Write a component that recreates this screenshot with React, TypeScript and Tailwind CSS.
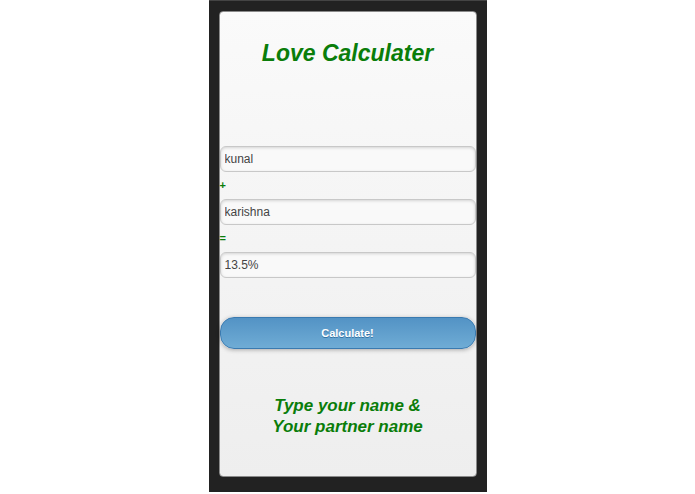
import React, { useState } from 'react';

function Field({ value, onChange }: { value: string; onChange: (v: string) => void }) {
  return (
    <input
      value={value}
      onChange={(e) => onChange(e.target.value)}
      className="block h-[26px] w-full rounded-[6px] border border-[#c8c8c8] bg-[#f9f9f9] px-[4px] text-[12px] text-[#444] shadow-[inset_0_1px_3px_rgba(0,0,0,0.15)] outline-none"
    />
  );
}

export default function App() {
  const [first, setFirst] = useState('kunal');
  const [second, setSecond] = useState('karishna');
  const [result, setResult] = useState('13.5%');

  const calc = () => {
    const s = (first + second).toLowerCase();
    let n = 0;
    for (const ch of s) n += ch.charCodeAt(0);
    setResult(((n % 1000) / 10).toFixed(1) + '%');
  };

  return (
    <div className="flex min-h-[494px] w-full justify-center bg-white font-['Liberation_Sans',Arial,sans-serif]">
      <div className="flex h-[492px] w-[278px] flex-col border-t border-t-[#444] bg-[#222] pb-[15px] pl-[10px] pr-[10px] pt-[10px]">
        <div className="flex flex-1 flex-col rounded-[4px] border border-[#8a8a8a] bg-gradient-to-b from-[#fafafa] to-[#eeeeee] pt-[28px]">
          <h1 className="text-center text-[23px] font-bold italic leading-[27px] text-[#0a7d0a]">
            Love Calculater
          </h1>

          <div className="mt-[79px]">
            <Field value={first} onChange={setFirst} />
            <div className="h-[27px] pt-[8px] text-[11px] font-bold leading-[11px] text-[#0a7d0a]">+</div>
            <Field value={second} onChange={setSecond} />
            <div className="h-[27px] pt-[8px] text-[11px] font-bold leading-[11px] text-[#0a7d0a]">=</div>
            <Field value={result} onChange={setResult} />
          </div>

          <button
            onClick={calc}
            className="mt-[39px] h-[32px] w-full rounded-[14px] border border-[#3a7ab0] bg-gradient-to-b from-[#5393c5] to-[#6facd5] text-[11px] font-bold text-white shadow-[0_1px_4px_rgba(0,0,0,0.3)] [text-shadow:0_1px_0_#3373a5]"
          >
            Calculate!
          </button>

          <p className="mt-[46px] text-center text-[17px] font-bold italic leading-[21px] text-[#0a7d0a]">
            Type your name &amp;
            <br />
            Your partner name
          </p>
        </div>
      </div>
    </div>
  );
}
